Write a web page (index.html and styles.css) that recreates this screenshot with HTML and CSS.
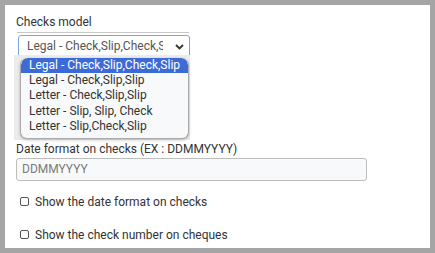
FILE: index.html
```html
<!DOCTYPE html>
<html lang="en">
<head>
<meta charset="utf-8">
<title>Checks settings</title>
<link rel="stylesheet" href="styles.css">
</head>
<body>
<div class="panel">
  <div class="field">
    <label class="label">Checks model</label>
    <div class="rule"></div>
    <div class="select-wrap">
      <div class="select">
        <span class="select-text">Legal - Check,Slip,Check,Slip</span>
        <svg class="chevron" width="9" height="6" viewBox="0 0 9 6"><path d="M1 1 L4.5 4.5 L8 1" fill="none" stroke="#333" stroke-width="1.8"/></svg>
      </div>
      <div class="backdrop"></div>
      <ul class="options">
        <li class="option selected">Legal - Check,Slip,Check,Slip</li>
        <li class="option">Legal - Check,Slip,Slip</li>
        <li class="option">Letter - Check,Slip,Slip</li>
        <li class="option">Letter - Slip, Slip, Check</li>
        <li class="option">Letter - Slip,Check,Slip</li>
      </ul>
    </div>
  </div>
  <div class="field date-field">
    <label class="label">Date format on checks (EX : DDMMYYYY)</label>
    <div class="input">DDMMYYYY</div>
  </div>
  <label class="check first">
    <input type="checkbox" class="box">
    <span>Show the date format on checks</span>
  </label>
  <label class="check second">
    <input type="checkbox" class="box">
    <span>Show the check number on cheques</span>
  </label>
</div>
</body>
</html>
```

FILE: styles.css
```css
html, body {
  margin: 0;
  padding: 0;
}
body {
  background: #a5a5a5;
  padding: 5px;
  width: 435px;
  height: 253px;
  box-sizing: border-box;
  font-family: Roboto, "Liberation Sans", Arial, sans-serif;
  font-size: 12px;
  line-height: 15px;
  color: #333;
}
.panel {
  background: #fff;
  height: 243px;
  box-sizing: border-box;
  padding: 10px 11px 0 11px;
}
.field {
  display: flex;
  flex-direction: column;
}
.label {
  display: block;
  height: 15px;
  color: #333;
}
.rule {
  margin: 2px 0 0 1px;
  width: 172px;
  border-top: 1px solid #c8c8c8;
}
.select-wrap {
  position: relative;
  margin: 2px 0 0 2px;
  width: 172px;
  height: 23px;
}
.select {
  box-sizing: border-box;
  height: 23px;
  width: 172px;
  border: 1px solid #7aa6e6;
  border-radius: 3px;
  background: #fff;
  display: flex;
  align-items: center;
  padding: 0 5px 0 8px;
  color: #555;
}
.select-text {
  overflow: hidden;
  white-space: nowrap;
  width: 136px;
  flex: 0 0 136px;
}
.chevron {
  margin-left: auto;
}
.backdrop {
  position: absolute;
  left: -4px;
  top: 20px;
  width: 176px;
  height: 85px;
  background: #ececec;
}
.options {
  position: absolute;
  left: 2px;
  top: 23px;
  width: 169px;
  margin: 0;
  padding: 0 0 3px 0;
  list-style: none;
  background: #f8f9fb;
  border: 1px solid #a9a9a9;
  border-top: none;
  border-radius: 7px;
  box-sizing: border-box;
  box-shadow: 0 1px 3px rgba(0,0,0,0.25);
  overflow: hidden;
}
.option {
  height: 15.4px;
  line-height: 15px;
  padding-left: 8px;
  color: #333;
  white-space: nowrap;
}
.option.selected {
  background: #3c6ad6;
  color: #fff;
  border-radius: 7px 7px 0 0;
  height: 15px;
}
.date-field {
  margin-top: 84px;
}
.input {
  box-sizing: border-box;
  margin-top: 1px;
  width: 351px;
  height: 23px;
  border: 1px solid #bdbdbd;
  border-radius: 3px;
  background: #f8f9fb;
  color: #7a7a7a;
  padding-left: 5px;
  display: flex;
  align-items: center;
}
.check {
  display: flex;
  align-items: center;
  height: 15px;
  padding-left: 4px;
  color: #333;
}
.check.first {
  margin-top: 14px;
}
.check.second {
  margin-top: 18px;
}
.box {
  appearance: none;
  -webkit-appearance: none;
  margin: 0 6px 0 0;
  width: 9px;
  height: 9px;
  border: 1px solid #555;
  border-radius: 2px;
  background: #fff;
  position: relative;
  top: -1px;
}
```
